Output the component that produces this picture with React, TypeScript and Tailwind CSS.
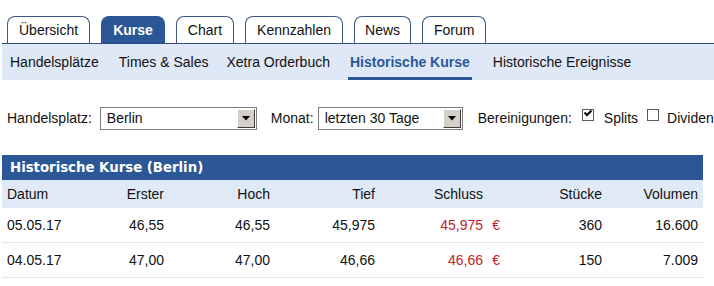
import React from "react";

const tabs = ["Übersicht", "Kurse", "Chart", "Kennzahlen", "News", "Forum"];
const subs = ["Handelsplätze", "Times & Sales", "Xetra Orderbuch", "Historische Kurse", "Historische Ereignisse"];

function Select({ width, value }: { width: string; value: string }) {
  return (
    <div className={`${width} shrink-0 h-[23px] border border-[#7a7a7a] bg-white flex items-stretch`}>
      <div className="flex-1 pl-[6px] flex items-center text-[14px] text-[#111] whitespace-nowrap">{value}</div>
      <div className="w-[18px] m-[1px] bg-[#d4d0c8] border border-t-white border-l-white border-r-[#404040] border-b-[#404040] flex items-center justify-center">
        <svg width="8" height="5" viewBox="0 0 8 5">
          <path d="M0 0 H8 L4 4.5 Z" fill="#000" />
        </svg>
      </div>
    </div>
  );
}

function Checkbox({ checked }: { checked: boolean }) {
  return (
    <div className="w-[12px] h-[12px] shrink-0 border border-[#5a5a5a] bg-white mb-[7px] flex items-start justify-center">
      {checked && (
        <svg width="10" height="8" viewBox="0 0 10 8">
          <path d="M1.5 2.5 L4 5 L8.5 0.5" stroke="#000" strokeWidth="2" fill="none" />
        </svg>
      )}
    </div>
  );
}

const rows = [
  ["05.05.17", "46,55", "46,55", "45,975", "45,975", "360", "16.600"],
  ["04.05.17", "47,00", "47,00", "46,66", "46,66", "150", "7.009"],
];

function Row({ cells, header }: { cells: string[]; header?: boolean }) {
  return (
    <div
      className={`flex items-center ${
        header ? "h-[28px] bg-[#e0e9f6]" : "h-[35px] bg-white border-b border-[#e3e3e3]"
      } text-[14px] text-[#111]`}
    >
      <div className="w-[98px] pl-[5px]">{cells[0]}</div>
      <div className="w-[64px] text-right">{cells[1]}</div>
      <div className="w-[106px] text-right">{cells[2]}</div>
      <div className="w-[105px] text-right">{cells[3]}</div>
      <div className={`w-[108px] text-right ${header ? "" : "text-[#c0222a]"}`}>{cells[4]}</div>
      <div className="w-[17px] text-right text-[#c0222a]">{header ? "" : "€"}</div>
      <div className="w-[102px] text-right">{cells[5]}</div>
      <div className="w-[96px] text-right">{cells[6]}</div>
    </div>
  );
}

export default function App() {
  return (
    <div
      className="w-[714px] h-[286px] bg-white overflow-hidden"
      style={{ fontFamily: '"Liberation Sans", Arial, sans-serif' }}
    >
      <div className="pt-[16px] pl-[2px]">
        <div className="flex items-end gap-[11px] pl-[5px] border-b border-[#2f4e7c]">
          {tabs.map((t) => (
            <div
              key={t}
              className={`h-[27px] ${t === "News" ? "px-[10px]" : "px-[11px]"} rounded-t-[8px] border border-b-0 flex items-center text-[14px] ${
                t === "Kurse"
                  ? "bg-[#2b5797] border-[#2b5797] text-white font-bold"
                  : "bg-white border-[#3d5a84] text-[#111]"
              }`}
            >
              {t}
            </div>
          ))}
        </div>
        <div className="h-[36px] bg-[#dfe8f6] flex items-stretch pl-[8px]">
          {subs.map((s, i) => (
            <div
              key={s}
              className={`flex items-center text-[14px] whitespace-nowrap ${
                ["mr-[20px]", "mr-[18px]", "mr-[18px]", "mr-[21px]", ""][i]
              } ${
                s === "Historische Kurse"
                  ? "font-bold text-[#2b5797] border-b-[3px] border-[#2b5797] pt-[3px] px-[2px]"
                  : "text-[#111]"
              }`}
            >
              {s}
            </div>
          ))}
        </div>
      </div>

      <div className="mt-[27px] flex items-center text-[14px] text-[#111] pl-[7px] whitespace-nowrap">
        <span className="mr-[8px] shrink-0">Handelsplatz:</span>
        <Select width="w-[157px]" value="Berlin" />
        <span className="ml-[14px] mr-[4px] shrink-0">Monat:</span>
        <Select width="w-[145px]" value="letzten 30 Tage" />
        <span className="ml-[15px] mr-[10px] shrink-0">Bereinigungen:</span>
        <Checkbox checked />
        <span className="ml-[10px] mr-[9px] shrink-0">Splits</span>
        <Checkbox checked={false} />
        <span className="ml-[8px] shrink-0">Dividenden</span>
      </div>

      <div className="mt-[25px] ml-[2px] w-[701px]">
        <div
          className="h-[25px] bg-[#2b5797] text-white font-bold text-[13.3px] flex items-center pl-[8px]"
          style={{ fontFamily: '"DejaVu Sans", Verdana, sans-serif' }}
        >
          Historische Kurse (Berlin)
        </div>
        <Row header cells={["Datum", "Erster", "Hoch", "Tief", "Schluss", "Stücke", "Volumen"]} />
        {rows.map((r) => (
          <Row key={r[0]} cells={r} />
        ))}
      </div>
    </div>
  );
}
